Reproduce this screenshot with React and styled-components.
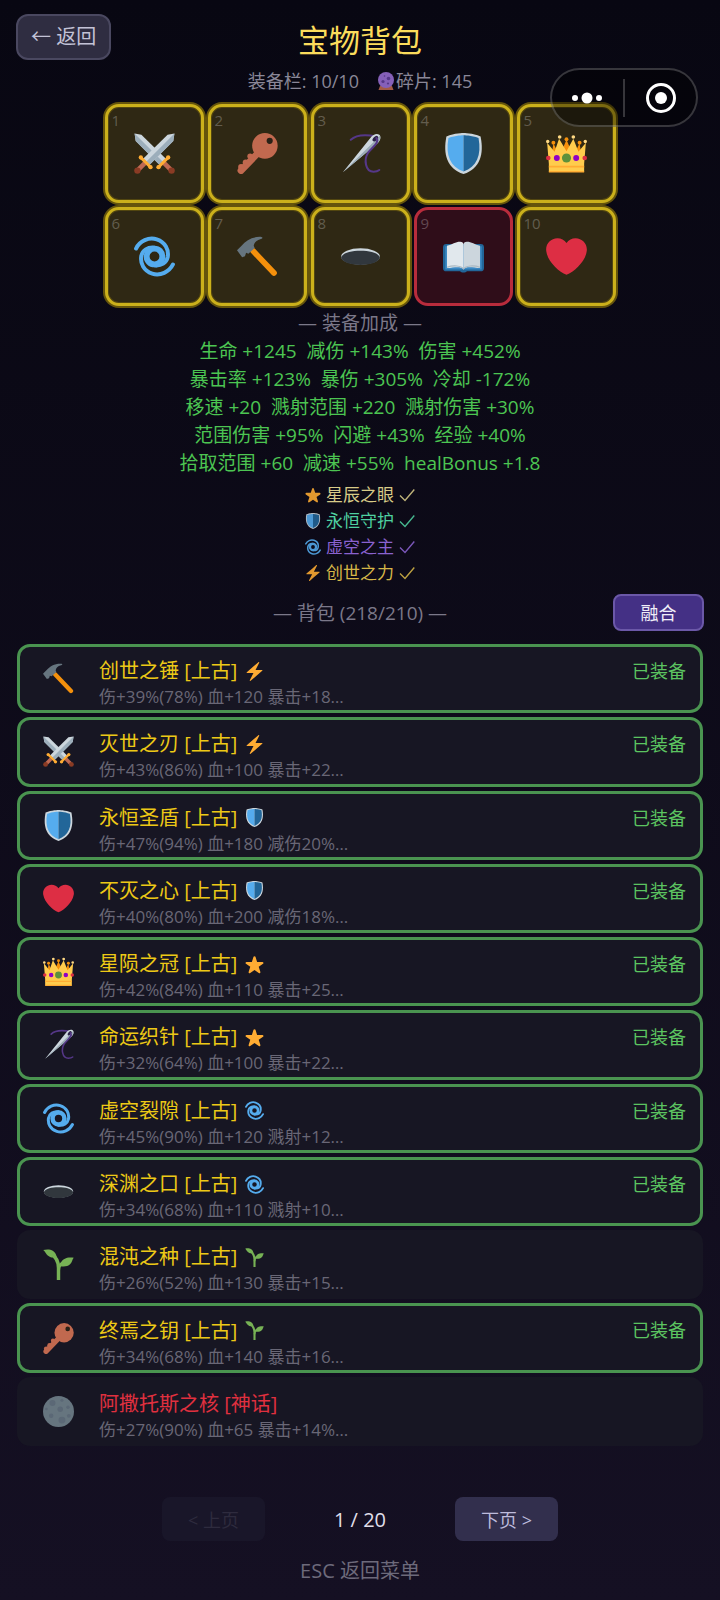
import React from 'react';
import styled, { createGlobalStyle } from 'styled-components';

const GlobalStyle = createGlobalStyle`
  * { box-sizing: border-box; }
  body {
    margin: 0;
    background: #0d0a18;
    color: #8a8798;
    font-family: "Open Sans", "Noto Sans CJK SC", sans-serif;
    font-size: 18px;
  }
  button { font: inherit; cursor: pointer; }
  h1, h2, p, ul { margin: 0; padding: 0; font-weight: 400; list-style: none; }
`;

/* ---------- icons ---------- */

const Glyph = styled.svg`
  display: block;
  flex: none;
  width: ${(p) => p.$size}px;
  height: ${(p) => p.$size}px;
`;

const Sword = () => (
  <>
    <path d="M35.500.5l-6 1L8 22.500l5.500 5.500L34.500 7z" fill="#CCD6DD" />
    <path d="M35.500.5L10.700 25.300l2.800 2.700L34.500 7z" fill="#9CAEBB" />
    <path d="M9.500 26.500L4 32" stroke="#BF6952" strokeWidth="4" />
    <circle cx="3" cy="33" r="2.800" fill="#8A3B24" />
    <path d="M6 21.500l8.500 8.500" stroke="#FFAC33" strokeWidth="2.600" />
    <circle cx="6" cy="21.500" r="1.900" fill="#FFAC33" />
    <circle cx="14.500" cy="30" r="1.900" fill="#FFAC33" />
  </>
);

const SpiralArm = () => (
  <path
    d="M1.800 11C5 4.500 13 .600 20 3c7.500 2.500 10.700 9 9.600 15.500C28.500 23.500 24 26.500 18 25.800"
    fill="none" stroke="#55ACEE" strokeWidth="3.500" strokeLinecap="round"
  />
);

const drawings = {
  swords: (
    <>
      <g transform="translate(36 0) scale(-1 1)"><Sword /></g>
      <Sword />
    </>
  ),
  key: (
    <g fill="#C1694F">
      <path d="M18 18L3.500 33" stroke="#C1694F" strokeWidth="6" strokeLinecap="round" />
      <circle cx="3.600" cy="29.800" r="2.600" />
      <circle cx="7.600" cy="25.800" r="2.600" />
      <circle cx="11.500" cy="20.500" r="2.400" />
      <circle cx="24.500" cy="11.300" r="11.200" />
      <circle cx="28.700" cy="6.900" r="2.700" fill="#292117" />
    </g>
  ),
  needle: (
    <>
      <path d="M9.500 6C14 1.500 22 1 32 3" fill="none" stroke="#553788" strokeWidth="1.800" strokeLinecap="round" />
      <path d="M2.500 34.500L27 4c2-2.500 5-4 7.500-2.500 2 1.800 1 5-1.300 7.200z" fill="#CCD6DD" />
      <path d="M2.500 34.500L32 5.500l3-3c.600 2-.100 4.400-1.800 6.200z" fill="#99AAB5" />
      <ellipse cx="31" cy="5" rx="3" ry="1.700" transform="rotate(-45 31 5)" fill="#2B2248" />
      <path d="M32 4.500c3 4-4 8-7.500 13C21 23 22 34 29.500 34c2 0 3.700-.400 5-1.500" fill="none" stroke="#553788" strokeWidth="1.800" strokeLinecap="round" />
    </>
  ),
  shield: (
    <>
      <path d="M33 3c-7-3-15-3-15-3S10 0 3 3C0 18 3 31 18 36c15-5 18-18 15-33z" fill="#CCD6DD" />
      <path d="M18 33.900C6.400 29.700 2 19.800 4.800 4.400 11 2 18 2 18 2z" fill="#55ACEE" />
      <path d="M31.200 4.400C25 2 18 2 18 2v31.900c11.600-4.200 16-14.100 13.200-29.500z" fill="#226699" />
    </>
  ),
  crown: (
    <>
      <path d="M4 26L6.500 9 12 20 18 6l6 14 5.500-11L32 26z" fill="#F4900C" />
      <circle cx="6.500" cy="8.500" r="1.700" fill="#F4900C" />
      <circle cx="18" cy="5.500" r="1.700" fill="#F4900C" />
      <circle cx="29.500" cy="8.500" r="1.700" fill="#F4900C" />
      <path d="M2.500 34V27L1 8.500l6.500 8L11.500 5 18 16l6-11 4.500 11.500L35 8.500 33.500 27v7z" fill="#FFCC4D" />
      <g fill="#FFD983">
        <circle cx="1.500" cy="7.500" r="1.500" /><circle cx="12" cy="3.500" r="1.600" />
        <circle cx="24" cy="3.500" r="1.600" /><circle cx="34.500" cy="7.500" r="1.500" />
      </g>
      <path d="M2.500 29.500h31M2.500 34h31" stroke="#FFAC33" strokeWidth="1.400" />
      <circle cx="18" cy="22" r="4" fill="#5C913B" />
      <circle cx="9.500" cy="22" r="2.600" fill="#9000C4" />
      <circle cx="26.500" cy="22" r="2.600" fill="#9000C4" />
      <circle cx="2" cy="22" r="2" fill="#DD2E44" />
      <circle cx="34" cy="22" r="2" fill="#DD2E44" />
    </>
  ),
  cyclone: (
    <>
      <circle cx="18" cy="18" r="6.900" fill="none" stroke="#55ACEE" strokeWidth="5.200" />
      <SpiralArm />
      <g transform="rotate(180 18 18)"><SpiralArm /></g>
    </>
  ),
  hammer: (
    <>
      <path d="M14 13l18.500 19.500" stroke="#F4900C" strokeWidth="5" strokeLinecap="round" />
      <path d="M0 12.500l4-4C8 3.500 14 .300 21.500.800c1.500.500 1 1.400-.500 1.800-4 1-6 3.400-6.300 6l.800 1.900-5.500 5-2-.800-1 3-2.500 1z" fill="#66757F" />
    </>
  ),
  hole: (
    <>
      <ellipse cx="18" cy="18" rx="17" ry="7.200" fill="#CCD6DD" />
      <path d="M1 18.500C3 14.500 10 13 18 13s15 1.500 17 5.500c0 4-7.600 7-17 7s-17-3-17-7z" fill="#31373D" />
    </>
  ),
  book: (
    <>
      <path d="M0 10c0-2 1-3 3-3h30c2 0 3 1 3 3v18c0 2-1 3-3 3H21c-1 1.500-5 1.500-6 0H3c-2 0-3-1-3-3z" fill="#226699" />
      <path d="M2 9h32v20.500H2z" fill="#3B88C3" />
      <path d="M3.500 8.500C8 7.500 11 5 15 5c2 0 3 1 3 2.500V29c-3-3-9-1-14.500-1z" fill="#E1E8ED" />
      <path d="M32.500 8.500C28 7.500 25 5 21 5c-2 0-3 1-3 2.500V29c3-3 9-1 14.500-1z" fill="#CCD6DD" />
      <path d="M3.500 27.500C9 25.500 16 26 18 29c2-3 9-3.500 14.500-1.500" fill="none" stroke="#AAB8C2" strokeWidth="1" />
    </>
  ),
  heart: (
    <path
      d="M35.885 11.833c0-5.450-4.418-9.868-9.867-9.868-3.308 0-6.227 1.633-8.018 4.129-1.791-2.496-4.710-4.129-8.017-4.129-5.450 0-9.868 4.417-9.868 9.868 0 .772.098 1.520.266 2.241C1.751 22.587 11.216 31.568 18 34.034c6.783-2.466 16.249-11.447 17.617-19.959.170-.721.268-1.469.268-2.242z"
      fill="#DD2E44"
    />
  ),
  star: (
    <path
      d="M27.287 34.627c-.404 0-.806-.124-1.152-.371L18 28.422l-8.135 5.834c-.343.247-.743.371-1.150.371-.413 0-.825-.129-1.173-.384-.683-.500-.968-1.380-.707-2.185l3.197-9.729-8.200-5.711c-.700-.479-1.006-1.360-.755-2.169.250-.811 1-1.363 1.849-1.363L13 13.057l3.141-9.537C16.400 2.709 17.152 2.163 18 2.163s1.600.546 1.859 1.357l3.062 9.537 10.138.029c.850 0 1.600.551 1.850 1.362.250.810-.056 1.690-.754 2.170l-8.200 5.711 3.193 9.729c.262.805-.023 1.685-.707 2.185-.348.255-.760.384-1.154.384z"
      fill="#FFAC33"
    />
  ),
  bolt: (
    <path
      d="M32.938 15.651C32.792 15.260 32.418 15 32 15H19.925L26.890 1.458c.219-.426.106-.947-.271-1.243C26.437.071 26.218 0 26 0c-.233 0-.466.082-.653.243L18 6.588 3.347 19.243c-.316.273-.430.714-.284 1.105S3.582 21 4 21h12.075L9.110 34.542c-.219.426-.106.947.271 1.243.182.144.401.215.619.215.233 0 .466-.082.653-.243L18 29.412l14.653-12.655c.317-.273.430-.714.285-1.106z"
      fill="#FFAC33"
    />
  ),
  seedling: (
    <>
      <path d="M18 36V22C18 14 15 9 9 5" fill="none" stroke="#77B255" strokeWidth="4" />
      <path d="M18 25c0-5 2-8 7-10" fill="none" stroke="#77B255" strokeWidth="3.500" />
      <path d="M.300 1.300C5 .200 14-.500 16 9.500 10 10.500 8 9.500 5.500 7.500 3.500 6 2.500 3 .300 1.300z" fill="#77B255" />
      <path d="M35.700 10.200c-6-.800-15-.200-15.500 9.800 4 .800 8.500.500 11.500-2.500 2.300-2.300 2-5 4-7.300z" fill="#77B255" />
    </>
  ),
  moon: (
    <>
      <circle cx="18" cy="18" r="18" fill="#66757F" />
      <g fill="#5B6876">
        <circle cx="11" cy="8" r="3.500" /><circle cx="20" cy="15.500" r="3.200" />
        <circle cx="29" cy="13" r="2" /><circle cx="9.500" cy="23" r="2.600" />
        <circle cx="22" cy="28" r="4" /><circle cx="30" cy="23" r="2.200" />
        <circle cx="22" cy="5" r="1.800" /><circle cx="4" cy="15" r="1.500" />
      </g>
    </>
  ),
  crystal: (
    <>
      <path d="M6 28h24l3 8H3z" fill="#A35A45" />
      <circle cx="18" cy="16" r="16" fill="#8560B8" />
      <g fill="#553788">
        <circle cx="12" cy="19" r="3.200" /><circle cx="23" cy="13" r="3.600" />
        <circle cx="22" cy="23" r="2.200" /><circle cx="15" cy="8" r="1.600" />
      </g>
    </>
  ),
};

const Icon = ({ name, size }) => (
  <Glyph $size={size} viewBox="0 0 36 36" aria-hidden="true">{drawings[name]}</Glyph>
);

/* ---------- page ---------- */

const Page = styled.main`
  position: relative;
  display: flex;
  flex-direction: column;
  min-height: 100vh;
  background: linear-gradient(#080712, #151023);
`;

const Header = styled.header`
  display: grid;
  grid-template-columns: 1fr auto 1fr;
  align-items: start;
  padding: 14px 16px 0;
`;

const BackButton = styled.button`
  justify-self: start;
  height: 46px;
  padding: 0 13px;
  border: 2px solid #4a4860;
  border-radius: 12px;
  background: #2f2d41;
  color: #c3c2d6;
  font-size: 20px;
  line-height: 40px;
`;

const Title = styled.h1`
  color: #fbdc5c;
  font-size: 31px;
  line-height: 52px;
`;

const Summary = styled.p`
  display: flex;
  justify-content: center;
  align-items: center;
  gap: 18px;
  line-height: 30px;
`;

const Shards = styled.span`
  display: flex;
  align-items: center;
  gap: 1px;
`;

const Capsule = styled.div`
  position: absolute;
  top: 68px;
  right: 22px;
  display: flex;
  align-items: center;
  width: 148px;
  height: 59px;
  border: 2px solid rgba(255, 255, 255, 0.2);
  border-radius: 30px;
  background: rgba(0, 0, 0, 0.4);
`;

const CapsuleButton = styled.button`
  flex: 1;
  display: flex;
  justify-content: center;
  padding: 0;
  border: 0;
  background: none;
  & + & { border-left: 2px solid rgba(255, 255, 255, 0.2); }
`;

const SlotGrid = styled.section`
  display: grid;
  grid-template-columns: repeat(5, 99px);
  justify-content: center;
  gap: 4px;
  margin-top: 8px;
`;

const Slot = styled.button`
  display: grid;
  place-items: center;
  height: 99px;
  padding: 0;
  border: 3px solid ${(p) => (p.$danger ? '#b82c3c' : '#cbb01b')};
  border-radius: 14px;
  background: ${(p) => (p.$danger ? '#2f0d19' : '#2f2814')};
  box-shadow: ${(p) => (p.$danger ? 'none' : '0 0 0 2px rgba(150, 126, 8, 0.65), inset 0 0 0 1px rgba(150, 126, 8, 0.35)')};
  & > * { grid-area: 1 / 1; }
`;

const SlotNumber = styled.span`
  place-self: start;
  padding: 3px 4px;
  color: rgba(255, 255, 255, 0.25);
  font-size: 15px;
  line-height: 20px;
`;

const SectionTitle = styled.h2`
  grid-column: 2;
  font-size: 19px;
  line-height: 28px;
  text-align: center;
  color: #7b7889;
`;

const Bonuses = styled.section`
  padding-top: 3px;
  text-align: center;
`;

const BonusLine = styled.p`
  color: #4cc552;
  font-size: 19px;
  line-height: 28px;
  white-space: pre;
`;

const Sets = styled.ul`
  align-self: center;
  padding-top: 5px;
`;

const SetLine = styled.li`
  display: flex;
  align-items: center;
  gap: 5px;
  color: ${(p) => p.$color};
  font-size: 17px;
  line-height: 26px;
  & > svg { opacity: 0.88; }
`;

const BagHeader = styled.div`
  display: grid;
  grid-template-columns: 1fr auto 1fr;
  align-items: center;
  padding: 8px 16px 0;
`;

const FuseButton = styled.button`
  grid-column: 3;
  justify-self: end;
  width: 91px;
  height: 37px;
  padding: 0;
  border: 2px solid #6b58a8;
  border-radius: 8px;
  background: #443085;
  color: #f0eef8;
  line-height: 32px;
`;

const List = styled.ul`
  flex: 1;
  display: grid;
  grid-auto-rows: 1fr;
  gap: 4px;
  margin: 13px 17px 0;
`;

const Row = styled.li`
  display: grid;
  grid-template-columns: 79px 1fr auto;
  align-items: center;
  padding-right: 14px;
  border: 3px solid ${(p) => (p.$equipped ? '#4a9450' : 'transparent')};
  border-radius: 13px;
  background: #171623;
`;

const RowIcon = styled.span`
  display: flex;
  padding-left: 23px;
`;

const RowText = styled.div`
  padding-top: 11px;
  line-height: 26px;
`;

const Name = styled.p`
  display: flex;
  align-items: center;
  gap: 8px;
  color: ${(p) => (p.$mythic ? '#e0303f' : '#edc916')};
  font-size: 20px;
`;

const Detail = styled.p`
  color: #696776;
  font-size: 17px;
`;

const Equipped = styled.span`
  align-self: start;
  padding-top: 11px;
  color: #5cc460;
  line-height: 26px;
`;

const Footer = styled.footer`
  padding: 51px 0 15px;
  text-align: center;
`;

const Pager = styled.nav`
  display: grid;
  grid-template-columns: 103px 190px 103px;
  justify-content: center;
  align-items: center;
`;

const PageButton = styled.button`
  height: 44px;
  padding: 0;
  border: 0;
  border-radius: 8px;
  background: #322f4d;
  color: #bdbbdc;
  &:disabled { background: #191629; color: #2e2b3e; cursor: default; }
`;

const PageCount = styled.span`
  color: #e0dfea;
  font-size: 20px;
`;

const Hint = styled.p`
  margin-top: 16px;
  color: #6d6a7b;
  font-size: 20px;
  line-height: 28px;
`;

const slots = [
  ['swords', '灭世之刃'], ['key', '终焉之钥'], ['needle', '命运织针'], ['shield', '永恒圣盾'], ['crown', '星陨之冠'],
  ['cyclone', '虚空裂隙'], ['hammer', '创世之锤'], ['hole', '深渊之口'], ['book', '神话之书'], ['heart', '不灭之心'],
];

const bonuses = [
  '生命 +1245  减伤 +143%  伤害 +452%',
  '暴击率 +123%  暴伤 +305%  冷却 -172%',
  '移速 +20  溅射范围 +220  溅射伤害 +30%',
  '范围伤害 +95%  闪避 +43%  经验 +40%',
  '拾取范围 +60  减速 +55%  healBonus +1.8',
];

const sets = [
  ['star', '星辰之眼', '#d8cb88'],
  ['shield', '永恒守护', '#4fd0a0'],
  ['cyclone', '虚空之主', '#8a62d0'],
  ['bolt', '创世之力', '#d6b748'],
];

const items = [
  { icon: 'hammer', name: '创世之锤 [上古]', tag: 'bolt', detail: '伤+39%(78%) 血+120 暴击+18…', equipped: true },
  { icon: 'swords', name: '灭世之刃 [上古]', tag: 'bolt', detail: '伤+43%(86%) 血+100 暴击+22…', equipped: true },
  { icon: 'shield', name: '永恒圣盾 [上古]', tag: 'shield', detail: '伤+47%(94%) 血+180 减伤20%…', equipped: true },
  { icon: 'heart', name: '不灭之心 [上古]', tag: 'shield', detail: '伤+40%(80%) 血+200 减伤18%…', equipped: true },
  { icon: 'crown', name: '星陨之冠 [上古]', tag: 'star', detail: '伤+42%(84%) 血+110 暴击+25…', equipped: true },
  { icon: 'needle', name: '命运织针 [上古]', tag: 'star', detail: '伤+32%(64%) 血+100 暴击+22…', equipped: true },
  { icon: 'cyclone', name: '虚空裂隙 [上古]', tag: 'cyclone', detail: '伤+45%(90%) 血+120 溅射+12…', equipped: true },
  { icon: 'hole', name: '深渊之口 [上古]', tag: 'cyclone', detail: '伤+34%(68%) 血+110 溅射+10…', equipped: true },
  { icon: 'seedling', name: '混沌之种 [上古]', tag: 'seedling', detail: '伤+26%(52%) 血+130 暴击+15…' },
  { icon: 'key', name: '终焉之钥 [上古]', tag: 'seedling', detail: '伤+34%(68%) 血+140 暴击+16…', equipped: true },
  { icon: 'moon', name: '阿撒托斯之核 [神话]', detail: '伤+27%(90%) 血+65 暴击+14%…', mythic: true },
];

export default function App() {
  return (
    <>
      <GlobalStyle />
      <Page>
        <Header>
          <BackButton type="button">← 返回</BackButton>
          <Title>宝物背包</Title>
        </Header>
        <Summary>
          <span>装备栏: 10/10</span>
          <Shards><Icon name="crystal" size={18} />碎片: 145</Shards>
        </Summary>

        <SlotGrid>
          {slots.map(([icon, label], i) => (
            <Slot key={icon} type="button" aria-label={label} $danger={icon === 'book'}>
              <SlotNumber>{i + 1}</SlotNumber>
              <Icon name={icon} size={41} />
            </Slot>
          ))}
        </SlotGrid>

        <Bonuses>
          <SectionTitle>— 装备加成 —</SectionTitle>
          {bonuses.map((line) => <BonusLine key={line}>{line}</BonusLine>)}
        </Bonuses>

        <Sets>
          {sets.map(([icon, name, color]) => (
            <SetLine key={name} $color={color}>
              <Icon name={icon} size={16} />
              {name}
              <Glyph $size={16} viewBox="0 0 16 16" role="img" aria-label="✓">
                <path d="M1 8.500l5 5L15.300 2.500" fill="none" stroke="currentColor" strokeWidth="1.400" />
              </Glyph>
            </SetLine>
          ))}
        </Sets>

        <BagHeader>
          <SectionTitle>— 背包 (218/210) —</SectionTitle>
          <FuseButton type="button">融合</FuseButton>
        </BagHeader>

        <List>
          {items.map((item) => (
            <Row key={item.name} $equipped={item.equipped}>
              <RowIcon><Icon name={item.icon} size={31} /></RowIcon>
              <RowText>
                <Name $mythic={item.mythic}>
                  {item.name}
                  {item.tag && <Icon name={item.tag} size={19} />}
                </Name>
                <Detail>{item.detail}</Detail>
              </RowText>
              {item.equipped && <Equipped>已装备</Equipped>}
            </Row>
          ))}
        </List>

        <Footer>
          <Pager>
            <PageButton type="button" disabled>&lt; 上页</PageButton>
            <PageCount>1 / 20</PageCount>
            <PageButton type="button">下页 &gt;</PageButton>
          </Pager>
          <Hint>ESC 返回菜单</Hint>
        </Footer>

        <Capsule>
          <CapsuleButton type="button" aria-label="更多">
            <svg width="32" height="38" viewBox="0 0 32 38" fill="#fff">
              <circle cx="3" cy="19" r="3" /><circle cx="15" cy="19" r="5.500" /><circle cx="27" cy="19" r="3" />
            </svg>
          </CapsuleButton>
          <CapsuleButton type="button" aria-label="关闭">
            <svg width="32" height="38" viewBox="0 0 32 38">
              <circle cx="16" cy="19" r="13.500" fill="none" stroke="#fff" strokeWidth="3" />
              <circle cx="16" cy="19" r="6" fill="#fff" />
            </svg>
          </CapsuleButton>
        </Capsule>
      </Page>
    </>
  );
}
